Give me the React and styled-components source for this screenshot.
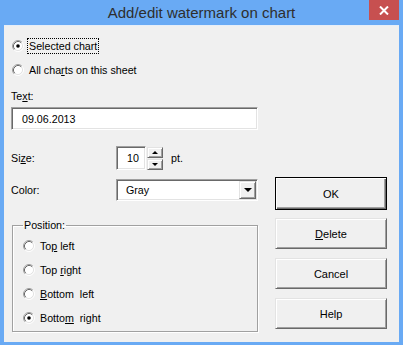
import styled, { createGlobalStyle } from "styled-components";

const GlobalStyle = createGlobalStyle`
  html, body {
    margin: 0;
    padding: 0;
  }
  body {
    width: 403px;
    height: 345px;
    overflow: hidden;
    background: #69aaf4;
    font-family: "Liberation Sans", Arial, sans-serif;
  }
`;

const Radio = ({ checked }) => (
  <RadioIcon viewBox="0 0 12 12">
    <circle cx="6" cy="6" r="4.5" fill="#fff" />
    <path d="M2.11 9.89 A5.5 5.5 0 0 1 9.89 2.11" stroke="#a0a0a0" fill="none" />
    <path d="M9.89 2.11 A5.5 5.5 0 0 1 2.11 9.89" stroke="#fff" fill="none" />
    <path d="M2.82 9.18 A4.5 4.5 0 0 1 9.18 2.82" stroke="#696969" fill="none" />
    <path d="M9.18 2.82 A4.5 4.5 0 0 1 2.82 9.18" stroke="#e3e3e3" fill="none" />
    {checked && <circle cx="6" cy="6" r="1.8" fill="#000" />}
  </RadioIcon>
);

const Option = ({ checked, focus, gap, children }) => (
  <OptionRow $gap={gap}>
    <Radio checked={checked} />
    <OptionText $focus={focus}>{children}</OptionText>
  </OptionRow>
);

const App = () => {
  return (
    <Window>
      <GlobalStyle />
      <TitleBar>
        <Title>Add/edit watermark on chart</Title>
        <CloseButton>
          <svg width="10" height="9" viewBox="0 0 10 9">
            <path d="M1 0.5 L9 8.5 M9 0.5 L1 8.5" stroke="#fff" strokeWidth="2" />
          </svg>
        </CloseButton>
      </TitleBar>
      <Client>
        <LeftColumn>
          <Option checked focus gap={0}>
            Selected chart
          </Option>
          <Option gap={7}>
            All cha<u>r</u>ts on this sheet
          </Option>
          <FieldLabel>
            Te<u>x</u>t:
          </FieldLabel>
          <TextBox>09.06.2013</TextBox>
          <FieldRow $gap={16}>
            <span>
              Si<u>z</u>e:
            </span>
            <SpinGroup>
              <SpinBox>10</SpinBox>
              <SpinButtons>
                <SmallButton>
                  <Arrow $up />
                </SmallButton>
                <SmallButton>
                  <Arrow />
                </SmallButton>
              </SpinButtons>
              <Unit>pt.</Unit>
            </SpinGroup>
          </FieldRow>
          <FieldRow $gap={9}>
            <span>Color:</span>
            <Combo>
              <ComboText>Gray</ComboText>
              <DropButton>
                <DropArrow />
              </DropButton>
            </Combo>
          </FieldRow>
          <Group>
            <Legend>Position:</Legend>
            <Option gap={0}>
              To<u>p</u> left
            </Option>
            <Option gap={7}>
              Top <u>r</u>ight
            </Option>
            <Option gap={7}>
              <u>B</u>ottom  left
            </Option>
            <Option checked gap={7}>
              Botto<u>m</u>  right
            </Option>
          </Group>
        </LeftColumn>
        <RightColumn>
          <Button $default>OK</Button>
          <Button $gap={8}>
            <u>D</u>elete
          </Button>
          <Button $gap={9}>Cancel</Button>
          <Button $gap={9}>Help</Button>
        </RightColumn>
      </Client>
    </Window>
  );
};

const Window = styled.div`
  width: 403px;
  height: 345px;
  display: flex;
  flex-direction: column;
  background: #69aaf4;
`;

const TitleBar = styled.div`
  height: 25px;
  flex: none;
  display: grid;
  grid-template-columns: 1fr auto 1fr;
  align-items: start;
`;

const Title = styled.div`
  grid-column: 2;
  font-size: 15px;
  line-height: 25px;
  color: #2e2e2e;
`;

const CloseButton = styled.div`
  justify-self: end;
  margin-right: 4px;
  width: 30px;
  height: 20px;
  background: #c75050;
  display: flex;
  align-items: center;
  justify-content: center;
`;

const Client = styled.div`
  flex: 1;
  margin: 0 4px 3px;
  background: #f0f0f0;
  border-top: 1px solid #e6eef8;
  display: flex;
  padding: 11px 0 0 7px;
  font-size: 10.7px;
  color: #000;
`;

const LeftColumn = styled.div`
  width: 247px;
  display: flex;
  flex-direction: column;
`;

const RightColumn = styled.div`
  margin: 140px 0 0 17px;
  width: 112px;
  display: flex;
  flex-direction: column;
`;

const RadioIcon = styled.svg`
  width: 12px;
  height: 12px;
  flex: none;
  margin-left: 1px;
`;

const OptionRow = styled.label`
  display: flex;
  align-items: center;
  gap: 3px;
  height: 17px;
  margin-top: ${(p) => p.$gap}px;
`;

const OptionText = styled.span`
  padding: 0 1px;
  line-height: 14px;
  border: 1px dotted ${(p) => (p.$focus ? "#000" : "transparent")};
  white-space: pre;
`;

const FieldLabel = styled.div`
  margin-top: 12px;
  line-height: 13px;
`;

const sunken = `
  box-sizing: border-box;
  background: #fff;
  border: 1px solid;
  border-color: #a0a0a0 #fff #fff #a0a0a0;
  box-shadow: inset 1px 1px 0 #696969, inset -1px -1px 0 #e3e3e3;
`;

const raised = `
  box-sizing: border-box;
  background: #f0f0f0;
  border: 1px solid;
  border-color: #e3e3e3 #696969 #696969 #e3e3e3;
  box-shadow: inset 1px 1px 0 #fff, inset -1px -1px 0 #a0a0a0;
`;

const TextBox = styled.div`
  ${sunken}
  margin-top: 4px;
  height: 23px;
  padding-left: 10px;
  display: flex;
  align-items: center;
`;

const FieldRow = styled.div`
  display: grid;
  grid-template-columns: 105px auto;
  align-items: center;
  margin-top: ${(p) => p.$gap}px;
`;

const SpinGroup = styled.div`
  display: flex;
  align-items: center;
  height: 24px;
`;

const SpinBox = styled.div`
  ${sunken}
  width: 30px;
  height: 24px;
  display: flex;
  align-items: center;
  justify-content: flex-end;
  padding-right: 6px;
`;

const SpinButtons = styled.div`
  display: flex;
  flex-direction: column;
  gap: 1px;
  margin-left: 1px;
`;

const SmallButton = styled.div`
  ${raised}
  width: 16px;
  height: 11px;
  display: flex;
  align-items: center;
  justify-content: center;
`;

const Arrow = styled.span`
  width: 0;
  height: 0;
  border-left: 3px solid transparent;
  border-right: 3px solid transparent;
  ${(p) =>
    p.$up ? "border-bottom: 3px solid #000;" : "border-top: 3px solid #000;"}
`;

const Unit = styled.span`
  margin-left: 8px;
`;

const Combo = styled.div`
  ${sunken}
  width: 142px;
  height: 22px;
  display: flex;
  align-items: center;
  padding: 0 1px 0 9px;
`;

const ComboText = styled.span`
  flex: 1;
`;

const DropButton = styled.div`
  ${raised}
  width: 17px;
  height: 18px;
  display: flex;
  align-items: center;
  justify-content: center;
`;

const DropArrow = styled.span`
  width: 0;
  height: 0;
  border-left: 4px solid transparent;
  border-right: 4px solid transparent;
  border-top: 4px solid #000;
`;

const Group = styled.fieldset`
  margin: 18px 0 0 1px;
  width: 246px;
  box-sizing: border-box;
  border: 1px solid #a0a0a0;
  box-shadow: 1px 1px 0 #fff, inset 1px 1px 0 #fff;
  padding: 5px 0 5px 9px;
  min-width: 0;
`;

const Legend = styled.legend`
  margin-left: 1px;
  padding: 0 1px;
  line-height: 13px;
`;

const Button = styled.div`
  ${raised}
  height: ${(p) => (p.$default ? 33 : 31)}px;
  margin-top: ${(p) => p.$gap || 0}px;
  display: flex;
  align-items: center;
  justify-content: center;
  font-size: 11px;
  ${(p) =>
    p.$default &&
    `
    border: 1px solid #000;
    box-shadow: inset 1px 1px 0 #fff, inset -1px -1px 0 #696969, inset -2px -2px 0 #a0a0a0;
  `}
`;

export default App;
